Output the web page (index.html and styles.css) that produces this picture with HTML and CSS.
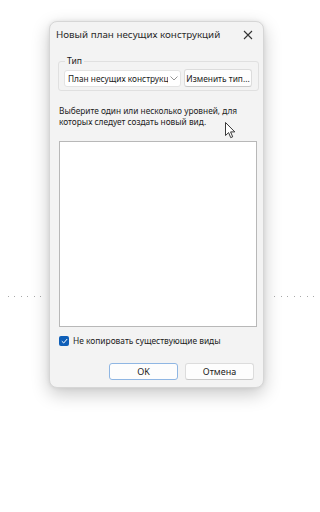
FILE: index.html
```html
<!DOCTYPE html>
<html lang="ru">
<head>
    <meta charset="UTF-8">
    <meta name="viewport" content="width=device-width, initial-scale=1.0">
    <title>Новый план несущих конструкций</title>
    <link rel="stylesheet" href="styles.css">
</head>
<body>
    <div class="stage">
        <div class="side side-left"><span class="dots"></span></div>

        <div class="dialog">
            <div class="titlebar">
                <span class="title">Новый план несущих конструкций</span>
                <svg class="close" width="10" height="10" viewBox="0 0 10 10">
                    <path d="M1 1L9 9M9 1L1 9" stroke="#333" stroke-width="1.1" fill="none"/>
                </svg>
            </div>

            <fieldset class="group">
                <legend>Тип</legend>
                <div class="type-row">
                    <div class="combo">
                        <span class="combo-text">План несущих конструкц.</span>
                        <svg class="chevron" width="8" height="5" viewBox="0 0 8 5">
                            <path d="M0.5 0.5L4 4L7.5 0.5" stroke="#888" stroke-width="0.9" fill="none"/>
                        </svg>
                    </div>
                    <button type="button" class="btn btn-small">Изменить тип...</button>
                </div>
            </fieldset>

            <p class="hint">Выберите один или несколько уровней, для которых следует создать новый вид.</p>
            <svg class="cursor" width="11" height="17" viewBox="0 0 11 17">
                <path d="M0.5 0.5V13.5L3.6 10.6L5.7 15.6L7.7 14.8L5.6 9.9H9.8Z" fill="#fff" stroke="#222" stroke-width="0.9" stroke-linejoin="round"/>
            </svg>

            <div class="levels"></div>

            <label class="check">
                <span class="box">
                    <svg width="7" height="6" viewBox="0 0 7 6">
                        <path d="M0.8 3.2L2.7 5L6.2 1" stroke="#fff" stroke-width="1" fill="none"/>
                    </svg>
                </span>
                Не копировать существующие виды
            </label>

            <div class="actions">
                <button type="button" class="btn btn-primary">OK</button>
                <button type="button" class="btn">Отмена</button>
            </div>
        </div>

        <div class="side side-right"><span class="dots"></span></div>
    </div>
</body>
</html>
```

FILE: styles.css
```css
* {
    box-sizing: border-box;
}

body {
    margin: 0;
    background-color: #fff;
    font-family: 'Noto Sans', 'Open Sans', sans-serif;
    color: #1b1b1b;
}

.stage {
    display: flex;
    padding-top: 21px;
    height: 512px;
}

.side {
    padding-top: 275px;
}

.side-left {
    width: 49px;
}

.side-right {
    flex: 1;
}

.dots {
    display: block;
    height: 1px;
    background-image: repeating-linear-gradient(90deg, #a8a8a8 0 1px, transparent 1px 6.5px);
}

.side-left .dots {
    margin-left: 8px;
    margin-right: 2px;
}

.side-right .dots {
    margin-left: 10px;
    margin-right: 2px;
}

.dialog {
    position: relative;
    width: 215px;
    height: 367px;
    background-color: #f3f3f3;
    border: 1px solid #d6d6d6;
    border-radius: 8px;
    box-shadow: 0 6px 18px rgba(0, 0, 0, 0.22), 0 0 4px rgba(0, 0, 0, 0.08);
    padding: 0 7px 0 8px;
    display: flex;
    flex-direction: column;
}

.titlebar {
    display: flex;
    justify-content: space-between;
    align-items: center;
    height: 24px;
}

.title {
    font-size: 9.8px;
    margin-left: -2px;
    margin-top: 1px;
    color: #2a2a2a;
}

.close {
    margin-right: 3px;
    margin-top: 1px;
}

.group {
    margin: 9px 0 0 0;
    padding: 4px 6px 5px 5px;
    border: 1px solid #e0e0e0;
    border-radius: 3px;
    height: 36px;
}

.group legend {
    font-size: 8.6px;
    padding: 0 2px;
    margin-left: 1px;
}

.type-row {
    display: flex;
    gap: 3px;
    align-items: center;
    margin-top: -2px;
}

.combo {
    display: flex;
    align-items: center;
    width: 117px;
    height: 17px;
    background-color: #fff;
    border: 1px solid #e3e3e3;
    border-radius: 3px;
    padding: 0 2px 0 3px;
}

.combo-text {
    flex: 1;
    min-width: 0;
    font-size: 8.3px;
    white-space: nowrap;
    overflow: hidden;
}

.chevron {
    margin-left: 2px;
    flex-shrink: 0;
}

.btn {
    font-family: inherit;
    font-size: 8.6px;
    color: #1b1b1b;
    background-color: #fdfdfd;
    border: 1px solid #dcdcdc;
    border-bottom-color: #c8c8c8;
    border-radius: 3px;
    height: 18px;
    padding: 0;
}

.btn-small {
    width: 68px;
    font-size: 8.4px;
}

.hint {
    font-size: 8.3px;
    line-height: 11px;
    margin: 14px 0 0 1px;
    color: #222;
}

.cursor {
    position: absolute;
    left: 175px;
    top: 100px;
}

.levels {
    margin: 14px 0 0 1px;
    height: 186px;
    width: 198px;
    background-color: #fff;
    border: 1px solid #b8b8b8;
}

.check {
    display: flex;
    align-items: center;
    gap: 4px;
    font-size: 8.4px;
    margin: 8px 0 0 1px;
}

.box {
    width: 10px;
    height: 10px;
    border-radius: 2px;
    background-color: #0f5fb8;
    display: flex;
    align-items: center;
    justify-content: center;
}

.actions {
    display: flex;
    justify-content: flex-end;
    gap: 7px;
    margin-top: 17px;
    padding-right: 2px;
}

.actions .btn {
    width: 69px;
    height: 17px;
    font-size: 9px;
}

.btn-primary {
    border-color: #8fb6e3;
}
```
